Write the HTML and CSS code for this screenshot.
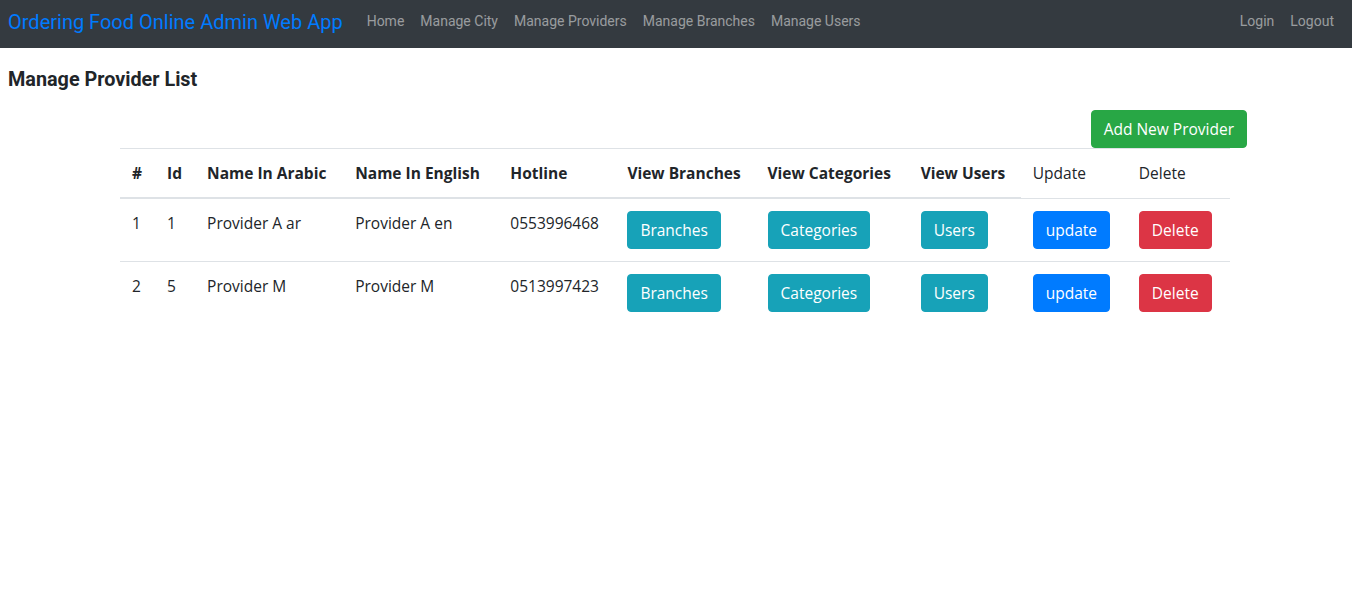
FILE: index.html
```html
<!DOCTYPE html>
<html>
<head>
<meta charset="utf-8">
<title>Manage Provider List</title>
<link rel="stylesheet" href="styles.css">
</head>
<body>
<nav class="navbar">
  <a class="brand" href="#">Ordering Food Online Admin Web App</a>
  <ul class="nav">
    <li><a href="#">Home</a></li>
    <li><a href="#">Manage City</a></li>
    <li><a href="#">Manage Providers</a></li>
    <li><a href="#">Manage Branches</a></li>
    <li><a href="#">Manage Users</a></li>
  </ul>
  <ul class="nav nav-right">
    <li><a href="#">Login</a></li>
    <li><a href="#">Logout</a></li>
  </ul>
</nav>
<main class="page">
  <h5 class="title">Manage Provider List</h5>
  <div class="container">
    <div class="toolbar">
      <button class="btn btn-success">Add New Provider</button>
    </div>
    <table class="table">
      <colgroup>
        <col class="c1"><col class="c2"><col class="c3"><col class="c4"><col class="c5">
        <col class="c6"><col class="c7"><col class="c8"><col class="c9"><col class="c10">
      </colgroup>
      <thead>
        <tr>
          <th>#</th>
          <th>Id</th>
          <th>Name In Arabic</th>
          <th>Name In English</th>
          <th>Hotline</th>
          <th>View Branches</th>
          <th>View Categories</th>
          <th>View Users</th>
          <td class="plain">Update</td>
          <td class="plain">Delete</td>
        </tr>
      </thead>
      <tbody>
        <tr>
          <td>1</td>
          <td>1</td>
          <td>Provider A ar</td>
          <td>Provider A en</td>
          <td>0553996468</td>
          <td><button class="btn btn-info">Branches</button></td>
          <td><button class="btn btn-info">Categories</button></td>
          <td><button class="btn btn-info">Users</button></td>
          <td><button class="btn btn-primary">update</button></td>
          <td><button class="btn btn-danger">Delete</button></td>
        </tr>
        <tr>
          <td>2</td>
          <td>5</td>
          <td>Provider M</td>
          <td>Provider M</td>
          <td>0513997423</td>
          <td><button class="btn btn-info">Branches</button></td>
          <td><button class="btn btn-info">Categories</button></td>
          <td><button class="btn btn-info">Users</button></td>
          <td><button class="btn btn-primary">update</button></td>
          <td><button class="btn btn-danger">Delete</button></td>
        </tr>
      </tbody>
    </table>
  </div>
</main>
</body>
</html>
```

FILE: styles.css
```css
* { box-sizing: border-box; }
html, body { margin: 0; padding: 0; }
body {
  font-family: "Open Sans", "Noto Sans", sans-serif;
  font-size: 15.5px;
  line-height: 24px;
  color: #212529;
  background: #fff;
}
a { text-decoration: none; }

.navbar {
  height: 48px;
  background: #343a40;
  display: flex;
  align-items: flex-start;
  padding: 3px 10px 0 8px;
  font-family: Roboto, "Liberation Sans", sans-serif;
}
.brand {
  color: #007bff;
  font-size: 20px;
  line-height: 30px;
  margin-top: 4px;
  margin-right: 16px;
}
.nav {
  list-style: none;
  margin: 0;
  padding: 0;
  display: flex;
}
.nav-right { margin-left: auto; }
.nav a {
  display: block;
  padding: 8px;
  font-size: 14px;
  line-height: 20px;
  color: rgba(255, 255, 255, 0.5);
}

.page { padding: 0 8px; }
.title {
  margin: 0;
  padding-top: 20px;
  font-family: Roboto, "Liberation Sans", sans-serif;
  font-size: 19.8px;
  font-weight: 700;
  line-height: 24px;
  color: #212529;
}
.container {
  width: 1110px;
  margin: 0 auto;
  position: relative;
  left: -1px;
}
.toolbar {
  display: flex;
  justify-content: flex-end;
  margin-top: 18px;
  margin-right: -17px;
}
.btn {
  display: inline-block;
  font-family: inherit;
  font-size: 15.5px;
  line-height: 24px;
  padding: 6px 12px;
  border: 1px solid transparent;
  border-radius: 4px;
  color: #fff;
  cursor: pointer;
  white-space: nowrap;
}
.btn-success { background: #28a745; border-color: #28a745; }
.btn-info { background: #17a2b8; border-color: #17a2b8; }
.btn-primary { background: #007bff; border-color: #007bff; }
.btn-danger { background: #dc3545; border-color: #dc3545; }

.table {
  width: 1110px;
  table-layout: fixed;
  border-collapse: collapse;
}
.c1 { width: 35px; }
.c2 { width: 40px; }
.c3 { width: 148px; }
.c4 { width: 155px; }
.c5 { width: 117px; }
.c6 { width: 140px; }
.c7 { width: 153px; }
.c8 { width: 112px; }
.c9 { width: 106px; }
.c10 { width: 103px; }
.table th, .table td {
  padding: 12px;
  text-align: left;
  vertical-align: top;
  line-height: 24px;
  border-top: 1px solid #dee2e6;
  white-space: nowrap;
}
.table thead th {
  font-weight: 700;
  border-bottom: 2px solid #dee2e6;
}
.table thead td.plain { font-weight: 400; }
```
